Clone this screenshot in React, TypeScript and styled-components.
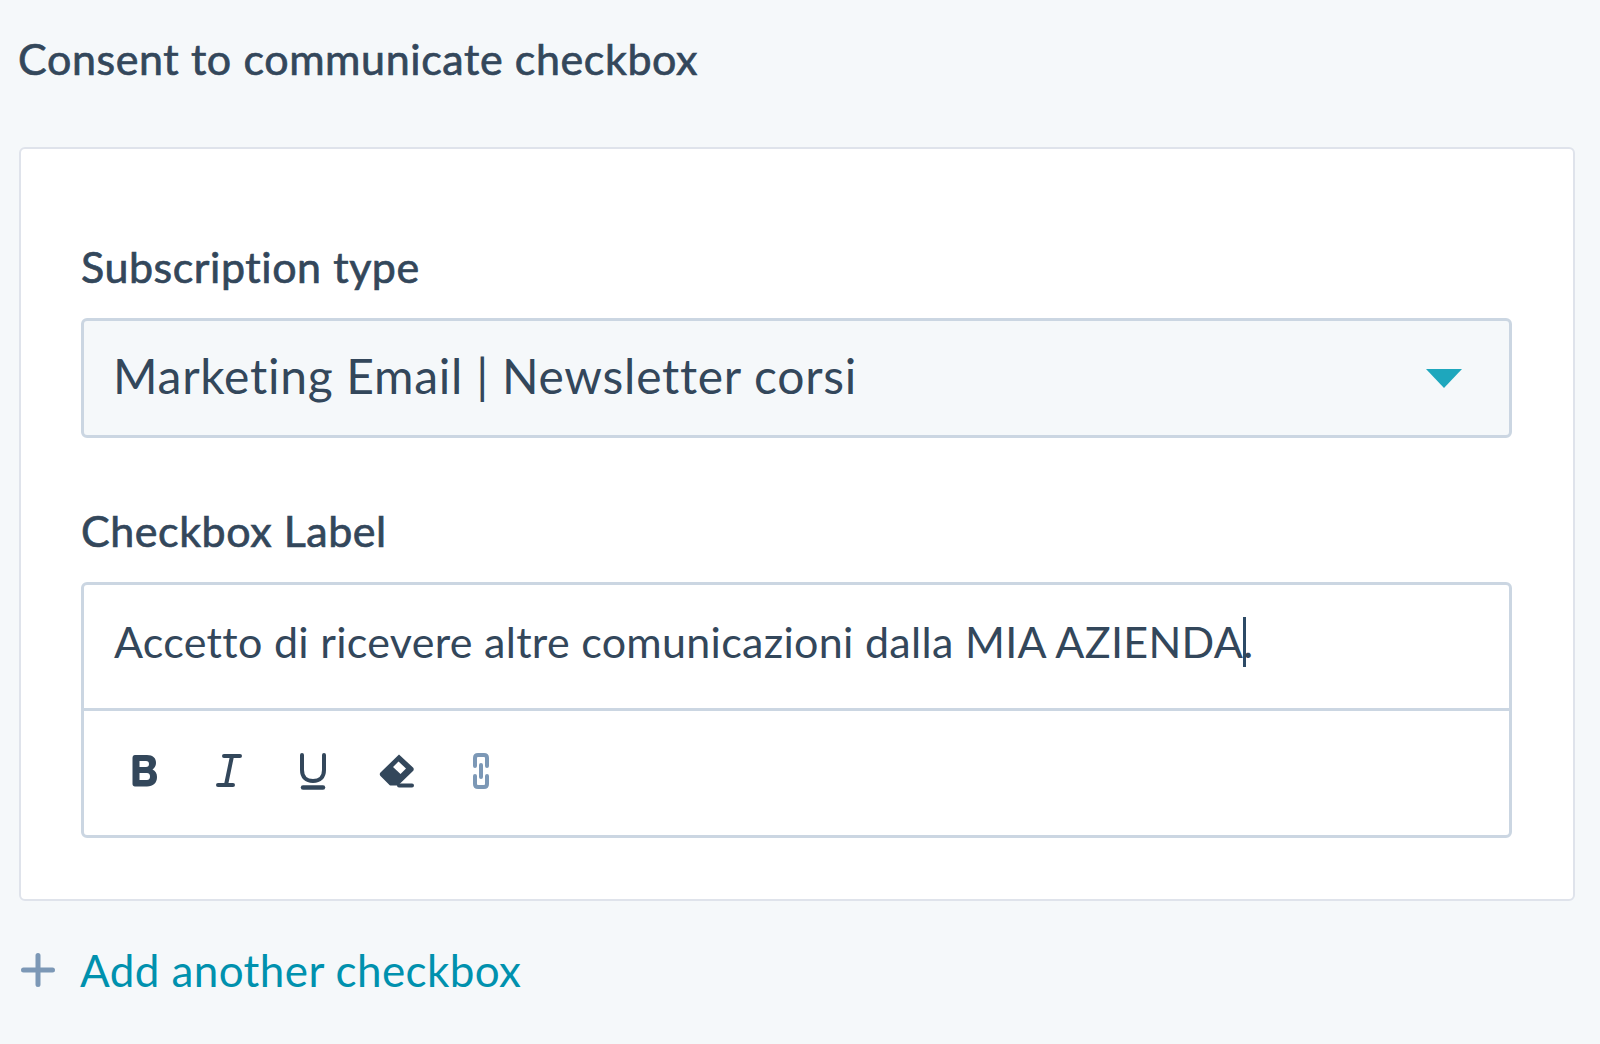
import styled, { createGlobalStyle } from 'styled-components';

const GlobalStyle = createGlobalStyle`
  html, body {
    margin: 0;
    padding: 0;
    background: #f5f8fa;
  }
  body {
    font-family: Lato, "Open Sans", sans-serif;
    font-variant-ligatures: none;
    color: #33475b;
  }
`;

const Page = styled.div`
  width: 1600px;
  height: 1044px;
  padding: 31px 25px 0 19px;
  box-sizing: border-box;
  overflow: hidden;
`;

const Title = styled.h2`
  margin: 0 0 60px -1px;
  font-size: 43px;
  line-height: 56px;
  letter-spacing: 0.6px;
  font-weight: 400;
  -webkit-text-stroke: 0.7px #33475b;
  color: #33475b;
`;

const Card = styled.div`
  background: #fff;
  border: 2px solid #dfe3eb;
  border-radius: 6px;
  padding: 90px 61px 60px 60px;
  height: 754px;
  box-sizing: border-box;
`;

const FieldLabel = styled.label`
  display: block;
  font-size: 43px;
  line-height: 56px;
  letter-spacing: 0.55px;
  font-weight: 400;
  -webkit-text-stroke: 0.7px #33475b;
  color: #33475b;
  margin-bottom: 23px;
`;

const Select = styled.div`
  display: flex;
  align-items: center;
  justify-content: space-between;
  height: 120px;
  box-sizing: border-box;
  padding: 0 47px 0 29px;
  background: #f5f8fa;
  border: 3px solid #cbd6e2;
  border-radius: 6px;
  margin-bottom: 65px;
`;

const SelectValue = styled.span`
  font-size: 48px;
  line-height: 60px;
  letter-spacing: 0.72px;
  color: #33475b;
  margin-top: -4px;
`;

const Caret = styled.span`
  width: 0;
  height: 0;
  border-left: 18px solid transparent;
  border-right: 18px solid transparent;
  border-top: 19px solid #1ea7bd;
`;

const Editor = styled.div`
  border: 3px solid #cbd6e2;
  border-radius: 6px;
  background: #fff;
  height: 256px;
  box-sizing: border-box;
`;

const EditorText = styled.div`
  height: 126px;
  box-sizing: border-box;
  padding: 29px 0 0 30px;
  border-bottom: 3px solid #cbd6e2;
  font-size: 43px;
  line-height: 56px;
  letter-spacing: 0.3px;
  color: #33475b;
  white-space: nowrap;
`;

const Cursor = styled.span`
  display: inline-block;
  width: 3px;
  height: 50px;
  margin-right: -3px;
  vertical-align: -9px;
  background: #2d4a66;
`;

const Toolbar = styled.div`
  display: flex;
  align-items: center;
  gap: 48px;
  padding: 41px 0 0 43px;
`;

const ToolIcon = styled.svg`
  width: 36px;
  height: 38px;
  display: block;
`;

const AddRow = styled.div`
  display: flex;
  align-items: center;
  gap: 25px;
  margin: 41px 0 0 2px;
`;

const PlusIcon = styled.svg`
  width: 34px;
  height: 34px;
  display: block;
`;

const AddLink = styled.a`
  font-size: 44px;
  line-height: 56px;
  letter-spacing: 0.4px;
  color: #0091ae;
  text-decoration: none;
`;

const App = () => {
  return (
    <>
      <GlobalStyle />
      <Page>
        <Title>Consent to communicate checkbox</Title>
        <Card>
          <FieldLabel>Subscription type</FieldLabel>
          <Select>
            <SelectValue>Marketing Email | Newsletter corsi</SelectValue>
            <Caret />
          </Select>
          <FieldLabel>Checkbox Label</FieldLabel>
          <Editor>
            <EditorText>
              Accetto di ricevere altre comunicazioni dalla MIA AZIENDA
              <Cursor />.
            </EditorText>
            <Toolbar>
              <ToolIcon viewBox="0 0 36 38">
                <path
                  fillRule="evenodd"
                  fill="#33475b"
                  d="M8 3h12c6 0 9 3 9 8 0 3-1.500 5-3.500 6.500 3 1.500 4.500 4 4.500 7.500 0 6-4 9.500-10 9.500H8c-1.500 0-2.500-1-2.500-2.500v-26C5.500 4 6.500 3 8 3zm4.500 6v6h6.500c2 0 3-1.200 3-3s-1-3-3-3zm0 12v7h7.500c2 0 3-1.500 3-3.500s-1-3.500-3-3.500z"
                />
              </ToolIcon>
              <ToolIcon viewBox="0 0 36 38">
                <path
                  fill="none"
                  stroke="#33475b"
                  strokeWidth="4"
                  strokeLinecap="round"
                  d="M13 4h16M21 4l-6 29M7 33h15"
                />
              </ToolIcon>
              <ToolIcon viewBox="0 0 36 38">
                <path
                  fill="none"
                  stroke="#33475b"
                  strokeWidth="4"
                  strokeLinecap="round"
                  d="M7 3v15c0 7 4 11 11 11s11-4 11-11V3"
                />
                <path fill="none" stroke="#33475b" strokeWidth="4.500" strokeLinecap="round" d="M8 35.500h20" />
              </ToolIcon>
              <ToolIcon viewBox="0 0 36 38">
                <path
                  fillRule="evenodd"
                  fill="#33475b"
                  d="M20 2.500l14 13c1 1 1 2.500 0 3.500L19 33.500H12c-1 0-1.500-.300-2-1L1.500 24c-1-1-1-2.500 0-3.500zm-.500 7l-5.500 5.500 7.500 7 5.500-5.500z"
                />
                <path fill="none" stroke="#33475b" strokeWidth="4" strokeLinecap="round" d="M20 33.500h13" />
              </ToolIcon>
              <ToolIcon viewBox="0 0 36 38">
                <path
                  fill="none"
                  stroke="#7c98b6"
                  strokeWidth="4"
                  strokeLinecap="round"
                  d="M12 14V6c0-2 1-3 3-3h6c2 0 3 1 3 3v8M12 24v8c0 2 1 3 3 3h6c2 0 3-1 3-3v-8M18 13v12"
                />
              </ToolIcon>
            </Toolbar>
          </Editor>
        </Card>
        <AddRow>
          <PlusIcon viewBox="0 0 34 34">
            <path fill="none" stroke="#7c98b6" strokeWidth="5" strokeLinecap="round" d="M17 2.500v29M2.500 17h29" />
          </PlusIcon>
          <AddLink>Add another checkbox</AddLink>
        </AddRow>
      </Page>
    </>
  );
};

export default App;
